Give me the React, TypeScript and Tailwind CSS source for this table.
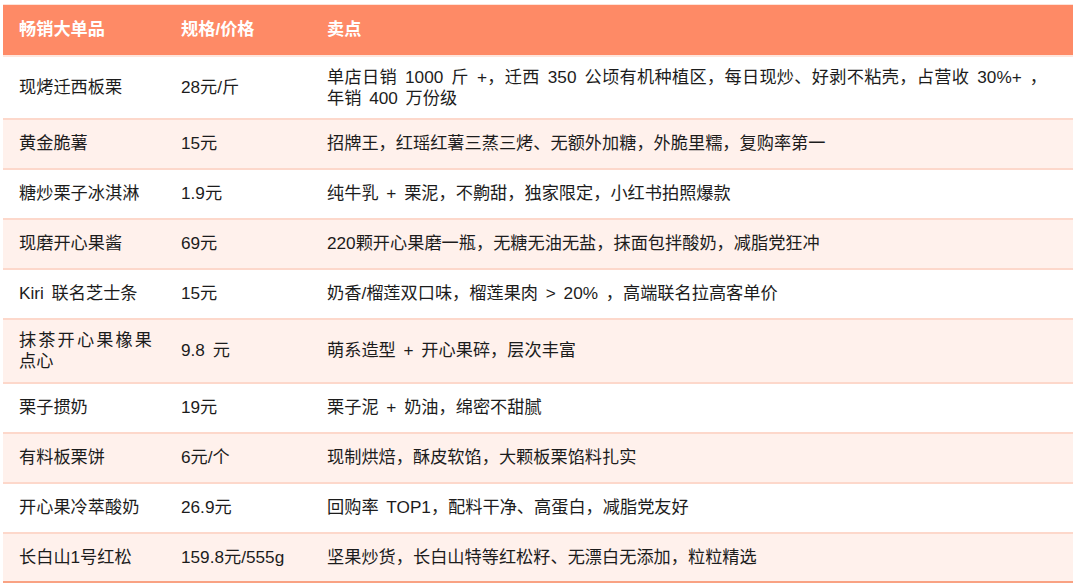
import React from "react";

const rows: { name: React.ReactNode; price: string; point: React.ReactNode; h: string; pink: boolean }[] = [
  {
    name: "现烤迁西板栗",
    price: "28元/斤",
    point: (
      <div className="leading-[21px]">
        <div className="w-[720px] text-justify [text-align-last:justify]">单店日销 1000 斤 +，迁西 350 公顷有机种植区，每日现炒、好剥不粘壳，占营收 30%+ ，</div>
        <div>年销 400 万份级</div>
      </div>
    ),
    h: "h-[63px]",
    pink: false,
  },
  { name: "黄金脆薯", price: "15元", point: "招牌王，红瑶红薯三蒸三烤、无额外加糖，外脆里糯，复购率第一", h: "h-[50px]", pink: true },
  { name: "糖炒栗子冰淇淋", price: "1.9元", point: "纯牛乳 + 栗泥，不齁甜，独家限定，小红书拍照爆款", h: "h-[50px]", pink: false },
  { name: "现磨开心果酱", price: "69元", point: "220颗开心果磨一瓶，无糖无油无盐，抹面包拌酸奶，减脂党狂冲", h: "h-[50px]", pink: true },
  { name: "Kiri 联名芝士条", price: "15元", point: "奶香/榴莲双口味，榴莲果肉 > 20% ，高端联名拉高客单价", h: "h-[50px]", pink: false },
  {
    name: (
      <div className="leading-[21px]">
        <div className="w-[133px] text-justify [text-align-last:justify]">抹茶开心果橡果</div>
        <div>点心</div>
      </div>
    ),
    price: "9.8 元",
    point: "萌系造型 + 开心果碎，层次丰富",
    h: "h-[64px]",
    pink: true,
  },
  { name: "栗子掼奶", price: "19元", point: "栗子泥 + 奶油，绵密不甜腻", h: "h-[50px]", pink: false },
  { name: "有料板栗饼", price: "6元/个", point: "现制烘焙，酥皮软馅，大颗板栗馅料扎实", h: "h-[50px]", pink: true },
  { name: "开心果冷萃酸奶", price: "26.9元", point: "回购率 TOP1，配料干净、高蛋白，减脂党友好", h: "h-[50px]", pink: false },
  { name: "长白山1号红松", price: "159.8元/555g", point: "坚果炒货，长白山特等红松籽、无漂白无添加，粒粒精选", h: "h-[51px]", pink: true },
];

export default function App() {
  return (
    <div
      className="w-[1080px] h-[588px] bg-white pt-[4px] pl-[3px] overflow-hidden"
      style={{ fontFamily: '"Liberation Sans", "Noto Sans CJK SC", sans-serif' }}
    >
      <div className="w-[1070px] text-[17.2px] text-[#1c1c1c] [word-spacing:3px]">
        <div className="h-[51px] border-t border-[#fde3d9] bg-[#fe8a66] grid grid-cols-[178px_146px_1fr] items-center font-bold text-white">
          <div className="pl-[16px]">畅销大单品</div>
          <div>规格/价格</div>
          <div>卖点</div>
        </div>
        {rows.map((r, i) => (
          <div
            key={i}
            className={`${r.h} grid grid-cols-[178px_146px_1fr] items-center border-t-2 ${
              i === 0 ? "border-[#fee6dd]" : "border-[#fdd8cb]"
            } ${i === rows.length - 1 ? "border-b-2 border-b-[#f9a283]" : ""} ${r.pink ? "bg-[#fff1ec]" : "bg-white"}`}
          >
            <div className="pl-[16px]">{r.name}</div>
            <div>{r.price}</div>
            <div>{r.point}</div>
          </div>
        ))}
      </div>
    </div>
  );
}
